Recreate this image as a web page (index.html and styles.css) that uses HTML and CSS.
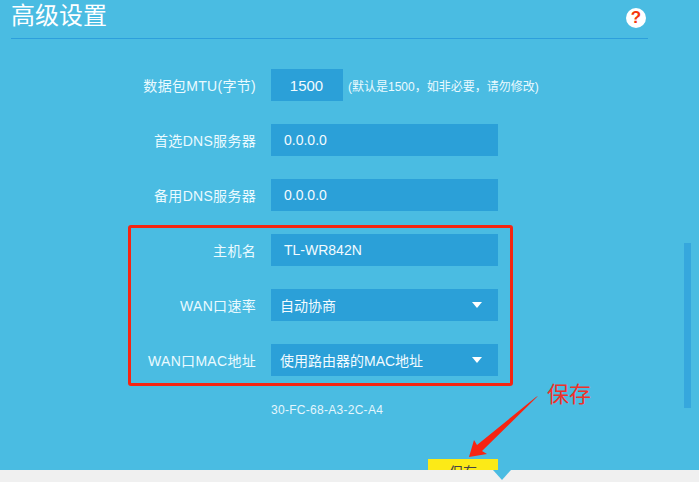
FILE: index.html
```html
<!DOCTYPE html>
<html lang="zh">
<head>
<meta charset="utf-8">
<title>高级设置</title>
<link rel="stylesheet" href="styles.css">
</head>
<body>
<div class="page">
  <header class="head">
    <h1 class="title">高级设置</h1>
    <span class="help">?</span>
  </header>
  <div class="form">
    <div class="row"><label class="label">数据包MTU(字节)</label><div class="field short">1500</div><span class="hint">(默认是1500，如非必要，请勿修改)</span></div>
    <div class="row"><label class="label">首选DNS服务器</label><div class="field">0.0.0.0</div></div>
    <div class="row"><label class="label">备用DNS服务器</label><div class="field">0.0.0.0</div></div>
    <div class="row"><label class="label">主机名</label><div class="field">TL-WR842N</div></div>
    <div class="row"><label class="label">WAN口速率</label><div class="field select">自动协商<i class="caret"></i></div></div>
    <div class="row"><label class="label">WAN口MAC地址</label><div class="field select">使用路由器的MAC地址<i class="caret"></i></div></div>
    <div class="mac">30-FC-68-A3-2C-A4</div>
  </div>
  <div class="scroll"></div>
  <div class="redbox"></div>
  <span class="note">保存</span>
  <button class="save">保存</button>
  <footer class="foot"><i class="notch"></i></footer>
  <svg class="arrow" width="72" height="66" viewBox="0 0 72 66"><path d="M71 0 L69 1 L10 49 L7 44 L2 61 L20 58 L15 55 Z" fill="#f62412"/></svg>
</div>
</body>
</html>
```
FILE: styles.css
```css
* { box-sizing: border-box; }
html, body { margin: 0; padding: 0; }
body { font-family: "Noto Sans CJK SC", "Liberation Sans", sans-serif; }
.page {
  position: relative;
  width: 699px;
  height: 482px;
  overflow: hidden;
  background: #4abce2;
  color: #fff;
}
.head {
  display: flex;
  justify-content: space-between;
  align-items: flex-start;
  height: 39px;
  margin: 0 51px 0 11px;
  border-bottom: 1px solid #2d9fdc;
}
.title {
  margin: 1px 0 0;
  font-size: 24px;
  font-weight: 400;
  line-height: 26px;
}
.help {
  width: 20px;
  height: 20px;
  margin: 8px 2px 0 0;
  border-radius: 50%;
  background: #fff;
  color: #f5360a;
  font: 700 17px/20px "Liberation Sans", sans-serif;
  text-align: center;
}
.form {
  display: flex;
  flex-direction: column;
  gap: 23px;
  padding-top: 30px;
}
.row {
  display: flex;
  align-items: center;
  height: 32px;
}
.label {
  width: 256px;
  margin-right: 15px;
  font-family: "Liberation Sans", "Noto Sans CJK SC", sans-serif;
  font-size: 14px;
  letter-spacing: .3px;
  text-align: right;
  color: #eafaff;
}
.field {
  position: relative;
  width: 227px;
  height: 32px;
  padding-left: 13px;
  background: #2ba0d8;
  font-family: "Liberation Sans", "Noto Sans CJK SC", sans-serif;
  font-size: 14px;
  line-height: 32px;
  color: #f2fbff;
}
.field.short {
  width: 72px;
  padding: 0 1px 0 0;
  font-size: 15px;
  line-height: 33px;
  text-align: center;
}
.field.select {
  padding-left: 9px;
  line-height: 34px;
}
.caret {
  position: absolute;
  top: 13px;
  right: 16px;
  border-top: 6px solid #fff;
  border-left: 5px solid transparent;
  border-right: 5px solid transparent;
}
.hint {
  margin-left: 5px;
  font-family: "Liberation Sans", "Noto Sans CJK SC", sans-serif;
  font-size: 12px;
  color: #eafaff;
}
.mac {
  margin: 4px 0 0 271px;
  font: 12px/14px "Liberation Sans", sans-serif;
  letter-spacing: .28px;
  color: #e4f6fd;
}
.scroll {
  position: absolute;
  left: 684px;
  top: 243px;
  width: 7px;
  height: 165px;
  background: #36a7dd;
}
.redbox {
  position: absolute;
  left: 128px;
  top: 225px;
  width: 385px;
  height: 161px;
  border: 3px solid #f62412;
  border-radius: 3px;
}
.note {
  position: absolute;
  left: 547px;
  top: 378px;
  font-size: 22px;
  line-height: 28px;
  color: #f0312a;
}
.arrow {
  position: absolute;
  left: 467px;
  top: 396px;
}
.foot {
  position: absolute;
  left: 0;
  right: 0;
  top: 470px;
  height: 12px;
  background: #f0f0f0;
}
.save {
  position: absolute;
  left: 428px;
  top: 459px;
  width: 70px;
  height: 24px;
  padding: 0;
  border: 0;
  background: #fcea17;
  color: #444;
  font: 14px/24px "Noto Sans CJK SC", sans-serif;
}
.notch {
  position: absolute;
  left: 493px;
  top: 0;
  border-top: 10px solid #4abce2;
  border-left: 9.5px solid transparent;
  border-right: 9.5px solid transparent;
}
```
